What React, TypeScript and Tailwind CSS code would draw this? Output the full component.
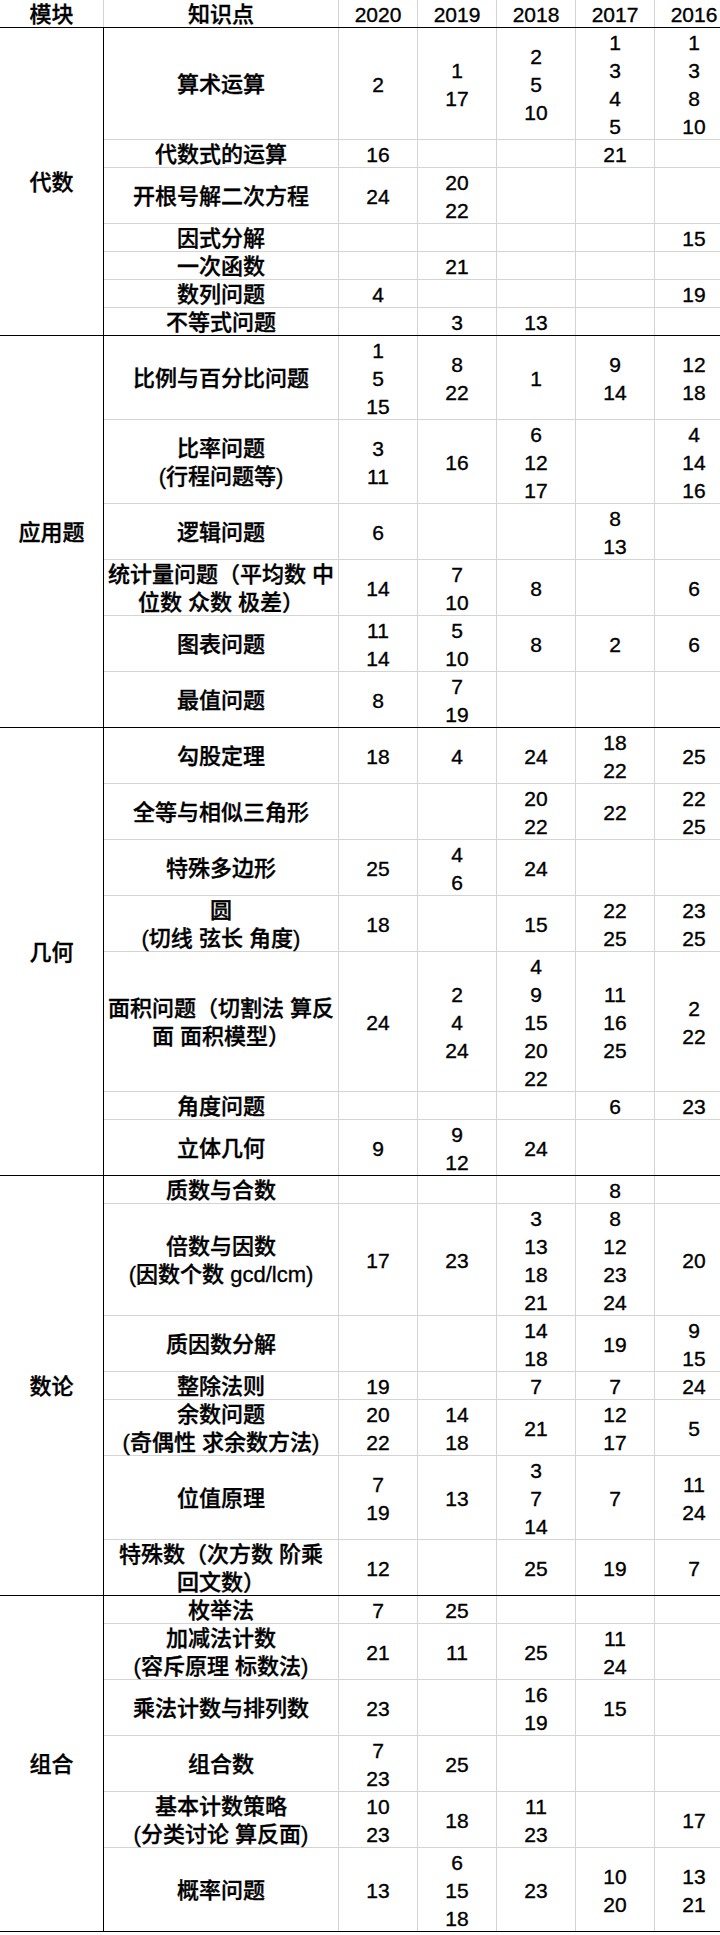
import React from "react";

type Row = { k: string[]; v: string[] };
type Group = { name: string; rows: Row[] };

const R = (k: string | string[], ...v: string[]): Row => ({
  k: Array.isArray(k) ? k : [k],
  v,
});

const groups: Group[] = [
  {
    name: "代数",
    rows: [
      R("算术运算", "2", "1,17", "2,5,10", "1,3,4,5", "1,3,8,10"),
      R("代数式的运算", "16", "", "", "21", ""),
      R("开根号解二次方程", "24", "20,22", "", "", ""),
      R("因式分解", "", "", "", "", "15"),
      R("一次函数", "", "21", "", "", ""),
      R("数列问题", "4", "", "", "", "19"),
      R("不等式问题", "", "3", "13", "", ""),
    ],
  },
  {
    name: "应用题",
    rows: [
      R("比例与百分比问题", "1,5,15", "8,22", "1", "9,14", "12,18"),
      R(["比率问题", "(行程问题等)"], "3,11", "16", "6,12,17", "", "4,14,16"),
      R("逻辑问题", "6", "", "", "8,13", ""),
      R(["统计量问题（平均数 中", "位数 众数 极差）"], "14", "7,10", "8", "", "6"),
      R("图表问题", "11,14", "5,10", "8", "2", "6"),
      R("最值问题", "8", "7,19", "", "", ""),
    ],
  },
  {
    name: "几何",
    rows: [
      R("勾股定理", "18", "4", "24", "18,22", "25"),
      R("全等与相似三角形", "", "", "20,22", "22", "22,25"),
      R("特殊多边形", "25", "4,6", "24", "", ""),
      R(["圆", "(切线 弦长 角度)"], "18", "", "15", "22,25", "23,25"),
      R(["面积问题（切割法 算反", "面 面积模型）"], "24", "2,4,24", "4,9,15,20,22", "11,16,25", "2,22"),
      R("角度问题", "", "", "", "6", "23"),
      R("立体几何", "9", "9,12", "24", "", ""),
    ],
  },
  {
    name: "数论",
    rows: [
      R("质数与合数", "", "", "", "8", ""),
      R(["倍数与因数", "(因数个数 gcd/lcm)"], "17", "23", "3,13,18,21", "8,12,23,24", "20"),
      R("质因数分解", "", "", "14,18", "19", "9,15"),
      R("整除法则", "19", "", "7", "7", "24"),
      R(["余数问题", "(奇偶性 求余数方法)"], "20,22", "14,18", "21", "12,17", "5"),
      R("位值原理", "7,19", "13", "3,7,14", "7", "11,24"),
      R(["特殊数（次方数 阶乘", "回文数）"], "12", "", "25", "19", "7"),
    ],
  },
  {
    name: "组合",
    rows: [
      R("枚举法", "7", "25", "", "", ""),
      R(["加减法计数", "(容斥原理 标数法)"], "21", "11", "25", "11,24", ""),
      R("乘法计数与排列数", "23", "", "16,19", "15", ""),
      R("组合数", "7,23", "25", "", "", ""),
      R(["基本计数策略", "(分类讨论 算反面)"], "10,23", "18", "11,23", "", "17"),
      R("概率问题", "13", "6,15,18", "23", "10,20", "13,21"),
    ],
  },
];

const H: Record<number, string> = {
  1: "h-[28px]",
  2: "h-[56px]",
  3: "h-[84px]",
  4: "h-[112px]",
  5: "h-[140px]",
};

const years = ["2020", "2019", "2018", "2017", "2016"];

function Lines({ items }: { items: string[] }) {
  return (
    <>
      {items.map((t, i) => (
        <React.Fragment key={i}>
          {i > 0 && <br />}
          {t}
        </React.Fragment>
      ))}
    </>
  );
}

function DataRow({ row, last }: { row: Row; last: boolean }) {
  const vals = row.v.map((s) => (s ? s.split(",") : []));
  const n = Math.max(row.k.length, ...vals.map((a) => a.length), 1);
  return (
    <div
      className={`flex ${H[n]} border-b ${
        last ? "border-black" : "border-[#d4d4d4]"
      }`}
    >
      <div className="w-[235px] shrink-0 border-r border-[#d4d4d4] pt-[2px] flex items-center justify-center text-center text-[22px] leading-[28px] whitespace-nowrap">
        <div>
          <Lines items={row.k} />
        </div>
      </div>
      {vals.map((a, i) => (
        <div
          key={i}
          className="w-[79px] shrink-0 border-r border-[#d4d4d4] pt-[2px] flex items-center justify-center text-center text-[21px] leading-[28px]"
        >
          <div>
            <Lines items={a} />
          </div>
        </div>
      ))}
    </div>
  );
}

export default function App() {
  return (
    <div className="w-[720px] overflow-hidden bg-white text-black font-['Liberation_Sans','Noto_Sans_CJK_SC',sans-serif] font-medium [-webkit-text-stroke:0.35px_#000]">
      <div className="w-[734px]">
        <div className="flex h-[28px] border-b border-black">
          <div className="w-[104px] shrink-0 border-r border-[#d4d4d4] pt-[2px] flex items-center justify-center text-[22px] leading-[28px]">
            模块
          </div>
          <div className="w-[235px] shrink-0 border-r border-[#d4d4d4] pt-[2px] flex items-center justify-center text-[22px] leading-[28px]">
            知识点
          </div>
          {years.map((y) => (
            <div
              key={y}
              className="w-[79px] shrink-0 border-r border-[#d4d4d4] pt-[2px] flex items-center justify-center text-[21px] leading-[28px]"
            >
              {y}
            </div>
          ))}
        </div>
        {groups.map((g) => (
          <div key={g.name} className="flex">
            <div className="w-[104px] shrink-0 border-r border-b border-r-black border-b-black pt-[2px] flex items-center justify-center text-[22px] leading-[28px]">
              {g.name}
            </div>
            <div className="flex flex-col">
              {g.rows.map((r, i) => (
                <DataRow key={i} row={r} last={i === g.rows.length - 1} />
              ))}
            </div>
          </div>
        ))}
      </div>
    </div>
  );
}
